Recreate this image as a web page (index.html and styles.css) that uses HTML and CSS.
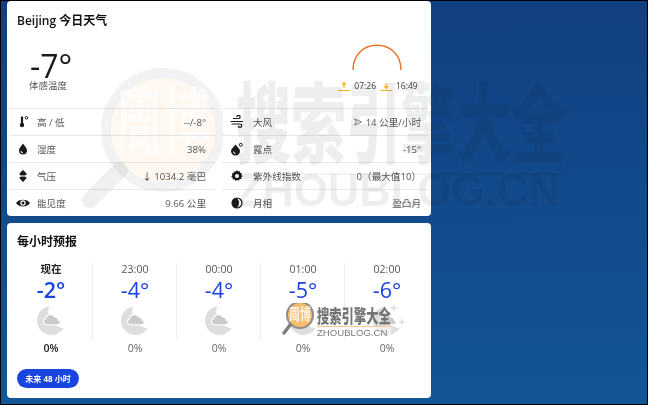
FILE: index.html
```html
<!DOCTYPE html>
<html lang="zh">
<head>
<meta charset="utf-8">
<title>Beijing 今日天气</title>
<link rel="stylesheet" href="styles.css">
</head>
<body>
<svg class="defs" width="0" height="0">
  <symbol id="moon" viewBox="0 0 30 32">
    <path fill="#dedede" d="M13 .7A15.500 15.500 0 1 0 28.500 24.400 18 18 0 0 1 13 .7Z"/>
    <path fill="#cbcbcb" stroke="#fff" stroke-width="1.200" d="M10 20.500a3.200 3.200 0 0 1-.6-6.300 5 5 0 0 1 9.400-2 3.800 3.800 0 0 1 4 3.400 2.500 2.500 0 0 1 .2 4.900Z"/>
  </symbol>
</svg>
<main class="page">
  <section class="card now">
    <h2 class="title">Beijing 今日天气</h2>
    <div class="hero">
      <div class="feel">
        <div class="bigtemp">-7°</div>
        <div class="feel-label">体感温度</div>
      </div>
      <div class="sun">
        <svg class="arc" width="50" height="27" viewBox="0 0 50 27"><path d="M1 26C1 -7 49 -7 49 26" fill="none" stroke="#e8702a" stroke-width="1.500"/></svg>
        <div class="sun-times">
          <svg class="sunicon" width="12" height="12" viewBox="0 0 12 12"><path d="M0 10.500H12" stroke="#f5b21b" stroke-width="1"/><path d="M6 8V3M4 5l2-2.500L8 5" fill="none" stroke="#f5b21b" stroke-width="1.200"/></svg>
          <span class="sun-t">07:26</span>
          <svg class="sunicon" width="12" height="12" viewBox="0 0 12 12"><path d="M0 10.500H12" stroke="#f5b21b" stroke-width="1"/><path d="M6 3V8M4 6l2 2.500L8 6" fill="none" stroke="#f5b21b" stroke-width="1.200"/></svg>
          <span class="sun-t">16:49</span>
        </div>
      </div>
    </div>
    <div class="grid">
      <div class="row">
        <svg class="ic" width="14" height="14" viewBox="0 0 14 14"><path d="M6 1.500V8" stroke="#1a1a1a" stroke-width="2.200"/><circle cx="6" cy="10" r="2.200" fill="#1a1a1a"/><circle cx="10.500" cy="2.800" r="1.300" fill="none" stroke="#1a1a1a"/></svg>
        <span class="lbl">高 / 低</span><span class="val">--/-8°</span>
      </div>
      <div class="row">
        <svg class="ic" width="14" height="14" viewBox="0 0 14 14"><path d="M3 3.500h5.500a1.600 1.600 0 1 0-1.600-1.600M.5 6.500H13M1.500 9H10a1.700 1.700 0 1 1-1.700 1.700" fill="none" stroke="#1a1a1a" stroke-width="1.200"/></svg>
        <span class="lbl">大风</span><span class="val"><svg class="wind" width="8" height="8" viewBox="0 0 8 8"><path d="M.5 .8 7.500 4 .5 7.200 2.500 4Z" fill="none" stroke="#777" stroke-width=".9"/></svg> 14 公里/小时</span>
      </div>
      <div class="row">
        <svg class="ic" width="14" height="14" viewBox="0 0 14 14"><path d="M7 1.500C9 4.500 11 6 11 8.500a4 4 0 0 1-8 0C3 6 5 4.500 7 1.500Z" fill="#1a1a1a"/><path d="M5 9a2 2 0 0 0 2 2" fill="none" stroke="#fff"/></svg>
        <span class="lbl">湿度</span><span class="val">38%</span>
      </div>
      <div class="row">
        <svg class="ic" width="14" height="14" viewBox="0 0 14 14"><path d="M5.500 2.500C7.500 5 10 7 10 9a4.500 4.500 0 0 1-9 0C1 7 3.500 5 5.500 2.500Z" fill="#1a1a1a"/><path d="M3.500 9.500a2 2 0 0 0 2 2" fill="none" stroke="#fff"/><circle cx="10.800" cy="2.800" r="1.500" fill="none" stroke="#1a1a1a"/></svg>
        <span class="lbl">露点</span><span class="val">-15°</span>
      </div>
      <div class="row">
        <svg class="ic" width="14" height="14" viewBox="0 0 14 14"><path d="M7 .8C8 2.500 10.500 3.800 10.500 5.200 10.500 6.200 9 6.500 7 6.500S3.500 6.200 3.500 5.200C3.500 3.800 6 2.500 7 .8ZM7 13.200C6 11.500 3.500 10.200 3.500 8.800 3.500 7.800 5 7.500 7 7.500S10.500 7.800 10.500 8.800C10.500 10.200 8 11.500 7 13.200Z" fill="#1a1a1a"/></svg>
        <span class="lbl">气压</span><span class="val"><span class="arrow">↓</span> 1034.2 毫巴</span>
      </div>
      <div class="row">
        <svg class="ic" width="14" height="14" viewBox="0 0 14 14"><path d="M7 1.500l1 1.600 1.900-.6.300 1.900 1.900.4-.5 1.800L13 8l-1.500 1.100.4 1.900-1.900.2L9 12.800l-2-.7-1.700 1-1-1.700-2 .2.100-2L.8 8.500 2 7 1.500 5.200l1.900-.5L3.600 2.800l1.900.4Z" fill="#1a1a1a" transform="translate(.5 -.3) scale(.93)"/><circle cx="7" cy="7" r="2" fill="#fff"/></svg>
        <span class="lbl">紫外线指数</span><span class="val">0（最大值10）</span>
      </div>
      <div class="row">
        <svg class="ic" width="14" height="14" viewBox="0 0 14 14"><path d="M0 7C2.500 2.500 11.500 2.500 14 7 11.500 11.500 2.500 11.500 0 7Z" fill="#1a1a1a"/><circle cx="7" cy="7" r="2.700" fill="#fff"/><circle cx="7" cy="7" r="1.500" fill="#1a1a1a"/></svg>
        <span class="lbl">能见度</span><span class="val">9.66 公里</span>
      </div>
      <div class="row">
        <svg class="ic" width="14" height="14" viewBox="0 0 14 14"><circle cx="7" cy="7" r="5" fill="#fff" stroke="#1a1a1a" stroke-width="1.200"/><path d="M7 2A5 5 0 0 0 7 12 8 8 0 0 0 7 2Z" fill="#1a1a1a"/></svg>
        <span class="lbl">月相</span><span class="val">盈凸月</span>
      </div>
    </div>
  </section>
  <section class="card hourly">
    <h2 class="title">每小时预报</h2>
    <div class="hours">
      <div class="hour active">
        <div class="time">现在</div><div class="temp">-2°</div>
        <svg class="moon" width="28" height="31"><use href="#moon"/></svg>
        <div class="pct">0%</div>
      </div>
      <div class="hour">
        <div class="time">23:00</div><div class="temp">-4°</div>
        <svg class="moon" width="28" height="31"><use href="#moon"/></svg>
        <div class="pct">0%</div>
      </div>
      <div class="hour">
        <div class="time">00:00</div><div class="temp">-4°</div>
        <svg class="moon" width="28" height="31"><use href="#moon"/></svg>
        <div class="pct">0%</div>
      </div>
      <div class="hour">
        <div class="time">01:00</div><div class="temp">-5°</div>
        <svg class="moon" width="28" height="31"><use href="#moon"/></svg>
        <div class="pct">0%</div>
      </div>
      <div class="hour">
        <div class="time">02:00</div><div class="temp">-6°</div>
        <svg class="moon" width="28" height="31"><use href="#moon"/></svg>
        <div class="pct">0%</div>
      </div>
    </div>
    <button class="more">未来 48 小时</button>
  </section>
</main>

<div class="wm wm-big">
  <svg class="wm-logo" width="143" height="145" viewBox="0 0 143 145">
    <circle cx="83" cy="62" r="52" fill="#f3a23a" fill-opacity=".08"/>
    <circle cx="83" cy="62" r="57" fill="none" stroke="#000" stroke-opacity=".05" stroke-width="10"/>
    <path d="M40 102 10 132" stroke="#000" stroke-opacity=".06" stroke-width="16" stroke-linecap="round"/>
    <text class="wm-mark" transform="translate(83 80) scale(1 1.5)" text-anchor="middle">周博</text>
  </svg>
  <div class="wm-text">
    <div class="wm-cn">搜索引擎大全</div>
    <div class="wm-rule"></div>
    <div class="wm-en">ZHOUBLOG.CN</div>
  </div>
</div>

<div class="wm wm-small">
  <svg class="wm-logo-s" width="38" height="36" viewBox="0 0 38 36">
    <circle cx="19" cy="12" r="13" fill="#f6bd6c"/>
    <circle cx="19" cy="12" r="13" fill="none" stroke="#8e8e8e" stroke-width="2"/>
    <path d="M9 22 3 30" stroke="#7d7d7d" stroke-width="3.500" stroke-linecap="round"/>
    <text class="wm-mark-s" transform="translate(19 17) scale(1 1.4)" text-anchor="middle">周博</text>
  </svg>
  <div class="wm-text-s">
    <div class="wm-cn-s">搜索引擎大全</div>
    <div class="wm-en-s">ZHOUBLOG.CN</div>
  </div>
  <svg class="sparkles" width="24" height="26" viewBox="0 0 24 26">
    <path d="M8 0 9 4 13 5 9 6 8 10 7 6 3 5 7 4ZM16 14 17 18 21 19 17 20 16 24 15 20 11 19 15 18Z" fill="#e2e2e2"/>
  </svg>
</div>
</body>
</html>
```
FILE: styles.css
```css
* { box-sizing: border-box; }
html, body { margin: 0; padding: 0; }
body {
  width: 648px;
  height: 405px;
  overflow: hidden;
  position: relative;
  font-family: "Open Sans", "Noto Sans CJK SC", sans-serif;
  color: #1a1a1a;
  background: #000;
}
.defs { position: absolute; }
.page {
  width: 646px;
  height: 403px;
  margin: 1px;
  padding: 0 0 0 6px;
  background: linear-gradient(180deg, #123f82 0%, #125695 100%);
  display: flex;
  flex-direction: column;
  gap: 7px;
}
.card {
  width: 424px;
  background: #fff;
  border-radius: 4px;
}
.now { height: 215px; padding: 12px 0 0 10px; }
.hourly { height: 175px; padding: 11px 0 0 10px; }
.title {
  margin: 0;
  font-size: 12px;
  line-height: 16px;
  font-weight: 600;
  color: #111;
}
.hero {
  display: flex;
  justify-content: space-between;
  height: 79px;
}
.feel { padding: 20px 0 0 12px; }
.bigtemp { font-size: 32px; line-height: 34px; color: #1a1a1a; margin-left: 1px; }
.feel-label { font-size: 9.500px; line-height: 13px; color: #555; margin-top: -4px; }
.sun {
  width: 79px;
  margin-right: 15px;
  display: flex;
  flex-direction: column;
  align-items: center;
  padding-top: 15px;
}
.arc { display: block; margin-left: 1px; }
.sun-times {
  display: flex;
  align-items: center;
  margin-top: 9px;
  margin-left: 3px;
  white-space: nowrap;
}
.sunicon { display: block; margin-right: 4px; }
.sun-t { font-size: 8.500px; line-height: 12px; color: #444; margin-right: 4px; }
.sun-t:last-child { margin-right: 0; }
.grid {
  display: grid;
  grid-template-columns: 206px 206px;
  column-gap: 7px;
  margin-left: -8px;
}
.row {
  height: 27px;
  display: flex;
  align-items: center;
  border-top: 1px solid #e9e9e9;
  padding: 0 9px 0 7px;
  font-size: 9.600px;
  color: #555;
  gap: 7px;
}
.row:nth-child(even) { padding: 0 7px 0 8px; gap: 9px; }
.ic { flex: none; }
.lbl { flex: 1; white-space: nowrap; }
.val { white-space: nowrap; }
.wind { vertical-align: 0; margin-right: 1px; }
.arrow { color: #333; }
.hours {
  display: flex;
  margin: 12px 0 0 -8px;
}
.hour {
  width: 84px;
  display: flex;
  flex-direction: column;
  align-items: center;
  position: relative;
}
.hour::after {
  content: "";
  position: absolute;
  right: 0;
  top: 1px;
  width: 1px;
  height: 77px;
  background: #eeeeee;
}
.hour:last-child::after { display: none; }
.time { font-size: 10.500px; line-height: 14px; color: #555; }
.temp { font-size: 21.500px; line-height: 28px; color: #1a44e0; }
.moon { display: block; margin-top: 1px; }
.pct { font-size: 10.500px; line-height: 14px; color: #666; margin-top: 5px; }
.active .time { color: #222; font-weight: 600; }
.active .temp { font-weight: 600; }
.active .pct { color: #222; font-weight: 600; }
.more {
  display: block;
  margin-top: 14px;
  width: 62px;
  height: 19px;
  border: 0;
  padding: 0;
  border-radius: 10px;
  background: #1a44e0;
  color: #fff;
  font-family: inherit;
  font-size: 8px;
  font-weight: 700;
}
.wm { position: absolute; pointer-events: none; }
.wm-big { left: 80px; top: 68px; display: flex; mix-blend-mode: multiply; }
.wm-logo { display: block; flex: none; }
.wm-mark {
  font-family: "Noto Sans CJK SC", sans-serif;
  font-size: 48px;
  font-weight: 700;
  fill: #fff;
  fill-opacity: .6;
}
.wm-text { margin-left: 13px; width: 330px; padding-top: 6px; }
.wm-cn {
  font-family: "Noto Sans CJK SC", sans-serif;
  font-size: 55px;
  line-height: 54px;
  font-weight: 900;
  color: rgba(0, 0, 0, .065);
  white-space: nowrap;
  transform: scaleY(1.6);
  transform-origin: top left;
}
.wm-rule { height: 2px; background: rgba(0, 0, 0, .05); margin-top: 45px; }
.wm-en {
  font-family: "Liberation Sans", sans-serif;
  font-size: 43.500px;
  line-height: 40px;
  font-weight: 700;
  color: rgba(0, 0, 0, .065);
  white-space: nowrap;
  margin-top: -5px;
  transform: scaleY(1.05);
}
.wm-small { left: 281px; top: 303px; display: flex; }
.wm-logo-s { display: block; flex: none; }
.wm-mark-s {
  font-family: "Noto Sans CJK SC", sans-serif;
  font-size: 11px;
  font-weight: 700;
  fill: #fff;
  fill-opacity: .85;
}
.wm-text-s { margin-left: -2px; padding-top: 3px; }
.wm-cn-s {
  font-family: "Noto Sans CJK SC", sans-serif;
  font-size: 12.300px;
  line-height: 13px;
  font-weight: 900;
  color: #757575;
  white-space: nowrap;
  transform: scaleY(1.5);
  transform-origin: top left;
}
.wm-en-s {
  font-family: "Liberation Sans", sans-serif;
  font-size: 9.600px;
  line-height: 11px;
  color: #7a7a7a;
  white-space: nowrap;
  border-top: 1px solid #f3c98a;
  margin-top: 7px;
  background: rgba(255, 255, 255, .5);
}
.sparkles { position: absolute; left: 105px; top: 0; }
```
